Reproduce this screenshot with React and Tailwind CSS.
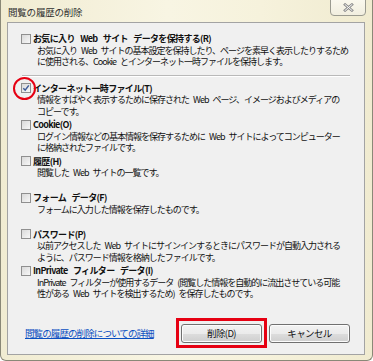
import React from 'react';

const font = "font-['Noto_Sans_CJK_JP','Noto_Sans_CJK_SC',sans-serif]";

// Win7 style checkbox
const CheckBox = ({ checked }) => (
    <span className="relative inline-block w-[10px] h-[10px] shrink-0 border border-[#8f8f8f] bg-[linear-gradient(135deg,#d9d9d9,#f7f7f7)]">
        {checked && (
            <svg className="absolute inset-0" width="8" height="8" viewBox="0 0 8 8">
                <path d="M1.3 4.2 L3.2 6.2 L6.8 1.4" fill="none" stroke="#3d5a99" strokeWidth="1.5" />
            </svg>
        )}
    </span>
);

const Item = ({ title, lines, checked, className, marker }) => (
    <div className={className}>
        <div className="relative flex items-center h-[11.5px]">
            <CheckBox checked={checked} />
            {marker && (
                <span className="absolute left-[-8px] top-[-5.5px] w-[23px] h-[23px] rounded-full border-2 border-[#e60012]" />
            )}
            <span className="ml-[2px] font-bold tracking-[-0.65px] [word-spacing:4px] whitespace-nowrap">{title}</span>
        </div>
        <div className="pl-[16px] whitespace-nowrap">
            {lines.map((l, i) => (
                <div key={i}>{l}</div>
            ))}
        </div>
    </div>
);

const Button = ({ children }) => (
    <div className="flex items-center justify-center w-[81px] h-[19px] rounded-[3px] border border-[#707070] shadow-[inset_0_0_0_1px_#fcfcfc] bg-[linear-gradient(#f2f2f2_0%,#ebebeb_50%,#dddddd_50%,#cfcfcf_100%)] text-[9.5px] tracking-[-0.6px]">
        {children}
    </div>
);

export default function App() {
    return (
        <div className={`${font} w-[373px] h-[361px] flex flex-col border-x border-b border-[#8a8877] rounded-b-[6px] overflow-hidden bg-[linear-gradient(90deg,#f1ecd2,#f8f5e3_45%,#f6f2dc_70%,#f0ebd0)] text-black`}>
            {/* title bar */}
            <div className="flex items-start justify-between h-[22px] shrink-0">
                <div className="pl-[7px] pt-[6px] text-[9.5px] leading-[12px] text-[#303030] tracking-[-0.2px]">閲覧の履歴の削除</div>
                <div className="mr-[6px] mt-[-1px] w-[36px] h-[17px] flex items-center justify-center border border-[#9a9a90] rounded-b-[4px] bg-[linear-gradient(#faf8ee,#f1eedf)]">
                    <svg width="11" height="9" viewBox="0 0 11 9">
                        <path d="M2 1.5 L9 7.5 M9 1.5 L2 7.5" stroke="#8a8a8a" strokeWidth="2.6" strokeLinecap="square" />
                        <path d="M2 1.5 L9 7.5 M9 1.5 L2 7.5" stroke="#fbfbfb" strokeWidth="1" strokeLinecap="square" />
                    </svg>
                </div>
            </div>

            {/* main panel */}
            <div className="flex-1 flex flex-col ml-[6px] mr-[7px] mb-[5px] border border-[#a3a3a3] bg-[#f0f0f0] px-[13px] pt-[10.25px] pb-[11px] text-[9px] leading-[11.5px] tracking-[-1px] [word-spacing:3px] text-[#111]">
                <Item
                    title="お気に入り Web サイト データを保持する(R)"
                    lines={[
                        'お気に入り Web サイトの基本設定を保持したり、ページを素早く表示したりするため',
                        'に使用される、Cookie とインターネット一時ファイルを保持します。',
                    ]}
                />
                <div className="mt-[6.75px] ml-[1px] mr-[1px] h-px shrink-0 bg-[#b9b9b9] shadow-[0_1px_0_#ffffff]" />
                <Item
                    className="mt-[7px] h-[36.5px]"
                    checked
                    marker
                    title="インターネット一時ファイル(T)"
                    lines={[
                        '情報をすばやく表示するために保存された Web ページ、イメージおよびメディアの',
                        'コピーです。',
                    ]}
                />
                <Item
                    className="h-[36.5px]"
                    title="Cookie(O)"
                    lines={[
                        'ログイン情報などの基本情報を保存するために Web サイトによってコンピューター',
                        'に格納されたファイルです。',
                    ]}
                />
                <Item className="h-[36.5px]" title="履歴(H)" lines={['閲覧した Web サイトの一覧です。']} />
                <Item className="h-[36.5px]" title="フォーム データ(F)" lines={['フォームに入力した情報を保存したものです。']} />
                <Item
                    className="h-[36.5px]"
                    title="パスワード(P)"
                    lines={[
                        '以前アクセスした Web サイトにサインインするときにパスワードが自動入力される',
                        'ように、パスワード情報を格納したファイルです。',
                    ]}
                />
                <Item
                    title="InPrivate フィルター データ(I)"
                    lines={[
                        'InPrivate フィルターが使用するデータ (閲覧した情報を自動的に流出させている可能',
                        '性がある Web サイトを検出するため) を保存したものです。',
                    ]}
                />

                {/* bottom row */}
                <div className="mt-auto flex items-center">
                    <a className="ml-[4px] text-[9.5px] tracking-[-0.9px] [word-spacing:0px] text-[#0a4fc1] underline whitespace-nowrap">
                        閲覧の履歴の削除についての詳細
                    </a>
                    <div className="ml-auto mr-[1px] flex gap-[7px] [word-spacing:0px]">
                        <div className="relative">
                            <Button>削除(D)</Button>
                            <span className="absolute left-[-5px] right-[-5px] top-[-6px] bottom-[-5px] border-[3px] border-[#e60012]" />
                        </div>
                        <Button>キャンセル</Button>
                    </div>
                </div>
            </div>
        </div>
    );
}
